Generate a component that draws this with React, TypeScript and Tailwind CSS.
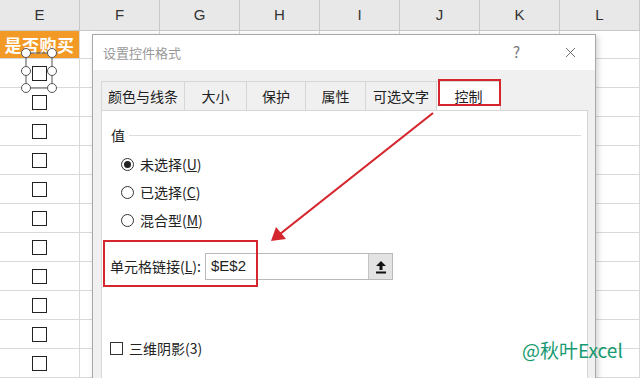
import { X } from "lucide-react";

const cols = ["E", "F", "G", "H", "I", "J", "K", "L"];
const rowCount = 12;

const Box = () => (
  <div className="w-[15px] h-[15px] border-[1.5px] border-[#222] bg-white" />
);

const Radio = ({ on }: { on?: boolean }) => (
  <div className="w-[13px] h-[13px] rounded-full border border-[#333] bg-white flex items-center justify-center">
    {on && <div className="w-[7px] h-[7px] rounded-full bg-[#222]" />}
  </div>
);

const tabs = [
  { label: "颜色与线条", w: "w-[84px]" },
  { label: "大小", w: "w-[62px]" },
  { label: "保护", w: "w-[59px]" },
  { label: "属性", w: "w-[60px]" },
  { label: "可选文字", w: "w-[71px]" },
  { label: "控制", w: "w-[64px]", active: true },
];

export default function App() {
  return (
    <div
      className="relative w-[640px] h-[378px] overflow-hidden bg-white text-[#222]"
      style={{ fontFamily: '"Noto Sans CJK SC", "Noto Sans", sans-serif' }}
    >
      {/* sheet */}
      <div className="grid grid-cols-[repeat(8,80px)]">
        {cols.map((c) => (
          <div
            key={c}
            className="h-[31px] bg-[#e8e8e8] border-r border-b border-[#c8c8c8] flex items-center justify-center text-[15px] text-[#333]"
            style={{ fontFamily: '"Liberation Sans", sans-serif' }}
          >
            {c}
          </div>
        ))}
        {Array.from({ length: rowCount }).map((_, r) =>
          cols.map((c, i) => (
            <div
              key={c + r}
              className={`${r === 0 ? "h-[28px]" : "h-[29px]"} border-r border-b border-[#d9d9d9] flex items-center justify-center ${
                r === 0 && i === 0 ? "bg-[#f39a26]" : ""
              }`}
            >
              {i === 0 && r === 0 && (
                <span className="text-white text-[17px] font-bold tracking-[0.5px]">是否购买</span>
              )}
              {i === 0 && r > 0 && <Box />}
            </div>
          ))
        )}
      </div>

      {/* selection handles */}
      <svg className="absolute left-0 top-0" width="80" height="100">
        <rect x="26" y="53" width="26" height="35" fill="none" stroke="#555" strokeWidth="1" />
        {[
          [26, 53],
          [52, 53],
          [26, 71],
          [52, 71],
          [26, 88],
          [52, 88],
        ].map(([x, y]) => (
          <circle key={`${x}-${y}`} cx={x} cy={y} r="4.5" fill="white" stroke="#555" strokeWidth="1" />
        ))}
      </svg>

      {/* dialog */}
      <div className="absolute left-[92px] top-[34px] w-[504px] h-[370px] bg-[#f0f0f0] border border-[#a8a8a8] shadow-[2px_2px_6px_rgba(0,0,0,0.18)] flex flex-col">
        <div className="h-[35px] bg-white flex items-center pl-[10px] pr-[16px] text-[13px] text-[#999]">
          <span className="flex-1">设置控件格式</span>
          <span className="mr-[42px] text-[15px] text-[#777]">?</span>
          <X size={17} strokeWidth={1.2} color="#555" />
        </div>
        <div className="flex-1 flex flex-col pl-[8px] pr-[8px] pt-[11px]">
          <div className="flex h-[29px]">
            {tabs.map((t) => (
              <div
                key={t.label}
                className={`${t.w} h-full flex items-center justify-center text-[14px] border-t border-r border-[#d6d6d6] first:border-l ${
                  t.active ? "bg-white" : "bg-[#f0f0f0]"
                }`}
              >
                {t.label}
              </div>
            ))}
          </div>
          <div className="flex-1 bg-white border border-[#d6d6d6] w-[487px] text-[14px]">
            <div className="flex items-center h-[20px] mt-[14px] pl-[9px] pr-[6px]">
              <span>值</span>
              <div className="flex-1 h-px bg-[#dcdcdc] ml-[4px]" />
            </div>
            <div className="mt-[5px] pl-[19px]">
              {[
                { t: "未选择(", k: "U", on: true },
                { t: "已选择(", k: "C" },
                { t: "混合型(", k: "M" },
              ].map((o) => (
                <div key={o.k} className="h-[28px] flex items-center gap-[6px]">
                  <Radio on={o.on} />
                  <span>
                    {o.t}
                    <u>{o.k}</u>)
                  </span>
                </div>
              ))}
            </div>
            <div className="mt-[19px] h-[27px] flex items-center pl-[8px]">
              <span className="w-[95px]">
                单元格链接(<u>L</u>):
              </span>
              <div className="w-[188px] h-[27px] border border-[#b9b9b9] flex">
                <div className="flex-1 flex items-center pl-[5px] text-[15px]" style={{ fontFamily: '"Liberation Sans", sans-serif' }}>
                  $E$2
                </div>
                <div className="w-[24px] h-full bg-[#e3e3e3] border-l border-[#c4c4c4] flex items-center justify-center">
                  <svg width="12" height="14" viewBox="0 0 12 14">
                    <path d="M6 1 L11 6 L7.5 6 L7.5 10 L4.5 10 L4.5 6 L1 6 Z" fill="#111" />
                    <rect x="1" y="11.5" width="10" height="2" fill="#111" />
                  </svg>
                </div>
              </div>
            </div>
            <div className="mt-[58px] flex items-center gap-[6px] pl-[8px]">
              <div className="w-[13px] h-[13px] border border-[#333]" />
              <span>三维阴影(3)</span>
            </div>
          </div>
        </div>
      </div>

      {/* annotations */}
      <div className="absolute left-[438px] top-[79px] w-[63px] h-[27px] border-2 border-[#d4262c]" />
      <div className="absolute left-[103px] top-[240px] w-[155px] h-[47px] border-2 border-[#d4262c]" />
      <svg className="absolute left-0 top-0 pointer-events-none" width="640" height="378">
        <line x1="433" y1="113" x2="280" y2="234" stroke="#d4262c" strokeWidth="2.2" />
        <path d="M271 241 L276 227 L286 239 Z" fill="#d4262c" />
      </svg>

      <div className="absolute left-[522px] top-[336px] text-[19px] text-[#179a70]">@秋叶Excel</div>
    </div>
  );
}
